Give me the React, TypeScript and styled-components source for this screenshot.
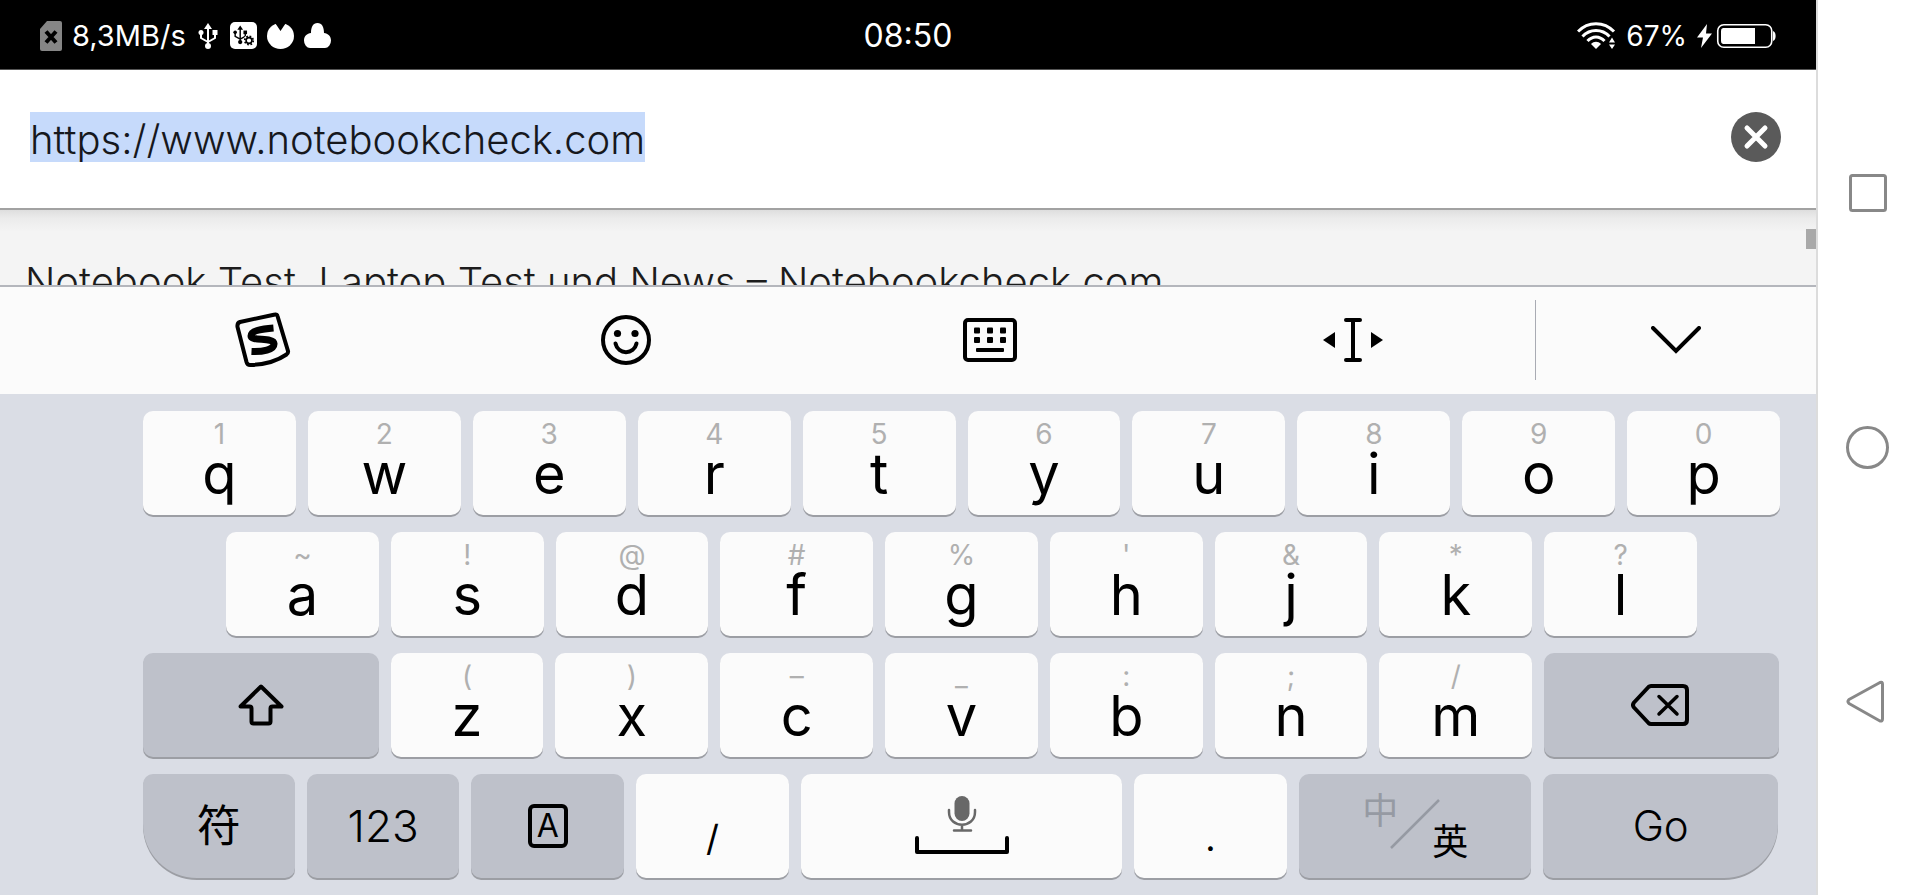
import React from "react";
import styled, { createGlobalStyle, css } from "styled-components";

const GlobalStyle = createGlobalStyle`
  *, *::before, *::after { box-sizing: border-box; }
  body {
    margin: 0;
    background: #fff;
    font-family: Inter, Roboto, "Noto Sans CJK SC", sans-serif;
  }
  button {
    margin: 0;
    padding: 0;
    border: 0;
    background: none;
    color: inherit;
    font: inherit;
    cursor: pointer;
  }
  svg { display: block; flex: none; }
`;

const Device = styled.div`
  display: flex;
  min-height: 100vh;
`;

const Screen = styled.div`
  flex: 1;
  min-width: 0;
  display: flex;
  flex-direction: column;
`;

const StatusBar = styled.header`
  display: grid;
  grid-template-columns: 1fr auto 1fr;
  align-items: center;
  height: 70px;
  padding: 2px 40px 0;
  background: #000;
  border-bottom: 1px solid #555;
  color: #fff;
  font-size: 28px;
`;

const StatusGroup = styled.div<{ $end?: boolean }>`
  display: flex;
  align-items: center;
  gap: 10px;
  justify-content: ${(p) => (p.$end ? "flex-end" : "flex-start")};
`;

const NetworkSpeed = styled.span`
  font-size: 29px;
`;

const Clock = styled.time`
  font-size: 32px;
  line-height: 36px;
`;

const AddressBar = styled.form`
  display: flex;
  align-items: center;
  justify-content: space-between;
  height: 140px;
  padding: 0 35px 4px 30px;
  background: #fff;
  border-bottom: 2px solid #a2a2a2;
`;

const UrlInput = styled.input`
  field-sizing: content;
  height: 50px;
  padding: 4px 0 0;
  border: 0;
  outline: 0;
  background: #c6dafb;
  color: #16181d;
  font: 300 40px/46px Inter, sans-serif;
`;

const Page = styled.main`
  display: flex;
  justify-content: space-between;
  align-items: flex-start;
  height: 75px;
  overflow: hidden;
  background: linear-gradient(#dedede, #ebebeb 8px, #f4f4f4 22px);
`;

const PageTitle = styled.h1`
  margin: 0;
  padding: 48px 0 0 25px;
  color: #1c1c1c;
  font-size: 40px;
  font-weight: 300;
  line-height: 48px;
  white-space: nowrap;
`;

const ScrollThumb = styled.div`
  width: 10px;
  height: 20px;
  margin-top: 19px;
  background: #a9a9a9;
`;

const Toolbar = styled.div`
  display: flex;
  align-items: center;
  height: 109px;
  padding: 0 0 2px 81px;
  border-top: 2px solid #b4b6bc;
  background: #fbfbfb;
`;

const Tool = styled.button<{ $grow: number }>`
  flex: ${(p) => p.$grow} 1 0;
  display: flex;
  align-items: center;
  justify-content: center;
  height: 80px;
`;

const ToolDivider = styled.div`
  width: 1px;
  height: 80px;
  background: #a9abb3;
`;

const Keyboard = styled.section`
  flex: 1;
  display: flex;
  flex-direction: column;
  gap: 17px;
  padding: 17px 36px 17px 143px;
  background: #dadde5;
`;

const KeyRow = styled.div<{ $left?: number; $right?: number }>`
  display: flex;
  gap: 12px;
  padding: 0 ${(p) => p.$right ?? 0}px 0 ${(p) => p.$left ?? 0}px;
`;

type Corner = "left" | "right";

const Key = styled.button<{ $grow?: number; $dark?: boolean; $corner?: Corner }>`
  flex: ${(p) => p.$grow ?? 153} 1 0;
  min-width: 0;
  height: 104px;
  display: flex;
  align-items: center;
  justify-content: center;
  border-radius: 10px;
  background: ${(p) => (p.$dark ? "#bec1ca" : "#fbfbfb")};
  box-shadow: 0 2px 0 #9c9ea4;
  color: #000;
  ${(p) => p.$corner === "left" && css`border-bottom-left-radius: 54px;`}
  ${(p) => p.$corner === "right" && css`border-bottom-right-radius: 54px;`}
`;

const LetterKey = styled(Key)`
  flex-direction: column;
  justify-content: flex-start;
  padding-top: 7px;
`;

const Hint = styled.span`
  color: #b0b0b0;
  font-size: 28px;
  line-height: 32px;
`;

const Letter = styled.span`
  font-size: 56px;
  line-height: 48px;
`;

const KeyLabel = styled.span<{ $size?: number; $light?: boolean }>`
  font-size: ${(p) => p.$size ?? 44}px;
  font-weight: ${(p) => (p.$light ? 300 : 400)};
  line-height: 52px;
`;

const PunctuationLabel = styled.span`
  padding-top: 24px;
  font-size: 36px;
  line-height: 44px;
`;

const BoxedLetter = styled.span`
  width: 40px;
  height: 44px;
  border: 4px solid #000;
  border-radius: 6px;
  font-size: 32px;
  line-height: 36px;
`;

const LanguageLabel = styled.span`
  display: grid;
  grid-template-columns: 20px 50px 20px;
  align-items: center;
  justify-content: center;
  justify-items: center;
  height: 61px;
  margin-bottom: 5px;
  font-family: "Noto Sans CJK SC", sans-serif;
  font-size: 36px;
  line-height: 30px;
`;

const Language = styled.span<{ $active?: boolean }>`
  align-self: ${(p) => (p.$active ? "end" : "start")};
  color: ${(p) => (p.$active ? "#000" : "#969aa3")};
`;

const NavBar = styled.nav`
  display: flex;
  flex-direction: column;
  width: 104px;
  padding: 66px 3px 66px 0;
  border-left: 2px solid #dcdcdc;
  background: #fff;
`;

const NavButton = styled.button`
  flex: 1;
  display: flex;
  align-items: center;
  justify-content: center;
`;

const SimIcon = () => (
  <svg width="22" height="30" viewBox="0 0 22 30" aria-hidden="true">
    <path d="M7 0H20a2 2 0 0 1 2 2V28a2 2 0 0 1-2 2H2a2 2 0 0 1-2-2V8Z" fill="#868686" />
    <path d="M6 10.500 16 21.500M16 10.500 6 21.500" stroke="#000" strokeWidth="4" />
  </svg>
);

const UsbShape = ({ color }: { color: string }) => (
  <g stroke={color} fill="none" strokeWidth="2">
    <path d="M10 5V23M10 19 3 15V9M10 19 17 15V9" />
    <path d="M10 0 14 6H6Z" fill={color} stroke="none" />
    <circle cx="10" cy="23" r="3" fill={color} stroke="none" />
    <circle cx="3" cy="9.500" r="2.500" fill={color} stroke="none" />
    <path d="M14.500 7H19.500V12H14.500Z" fill={color} stroke="none" />
  </g>
);

const UsbIcon = () => (
  <svg width="24" height="26" viewBox="-2 0 24 26" aria-hidden="true">
    <UsbShape color="#fff" />
  </svg>
);

const UsbSettingsIcon = () => (
  <svg width="27" height="27" viewBox="0 0 27 27" aria-hidden="true">
    <rect width="27" height="27" rx="5" fill="#fff" />
    <g transform="translate(3 3.500) scale(.72)">
      <UsbShape color="#000" />
    </g>
    <circle cx="19" cy="18.500" r="5.500" fill="#fff" />
    <circle cx="19" cy="18.500" r="4.200" fill="none" stroke="#000" strokeWidth="1.800" strokeDasharray="1.700 1.600" />
    <circle cx="19" cy="18.500" r="2.900" fill="none" stroke="#000" strokeWidth="1.600" />
  </svg>
);

const NotchedDotIcon = () => (
  <svg width="27" height="27" viewBox="0 0 27 27" aria-hidden="true">
    <ellipse cx="13.500" cy="14" rx="13.500" ry="13" fill="#fff" />
    <path d="M7 0H20L17.500 3 13.500 9 9.500 3Z" fill="#000" />
  </svg>
);

const CloudIcon = () => (
  <svg width="27" height="25" viewBox="0 0 27 25" aria-hidden="true">
    <path
      d="M6 25a6 7.500 0 0 1-6-7.500C0 13 3 10.500 7 10 7 4 9 0 13.500 0S20 4 20 10c4 .5 7 3 7 7.500A6 7.500 0 0 1 21 25Z"
      fill="#fff"
    />
  </svg>
);

const WifiIcon = () => (
  <svg width="39" height="27" viewBox="0 0 39 27" fill="none" aria-hidden="true">
    <g stroke="#fff" strokeWidth="3">
      <path d="M1 9.500C11 -1 27 -1 37 9.500" />
      <path d="M5.500 14.500C13 6.500 25 6.500 32.500 14.500" />
      <path d="M10.500 19C15.500 13.500 22.500 13.500 27.500 19" />
    </g>
    <path d="M14 22C17 19 21 19 24 22L19 27Z" fill="#fff" />
    <path d="M32 20.500 35 15.500 38 20.500ZM32 22.500 35 27 38 22.500Z" fill="#fff" />
  </svg>
);

const BatteryIcon = () => (
  <svg width="79" height="26" viewBox="0 0 79 26" aria-hidden="true">
    <path d="M10 1 0 14.500H6L4 25 15 10.500H9Z" fill="#fff" />
    <rect x="20.750" y="1.750" width="54" height="22.500" rx="6" fill="none" stroke="#fff" strokeWidth="1.600" />
    <path d="M26 5H58V21H26a3 3 0 0 1-2-3V8a3 3 0 0 1 2-3Z" fill="#fff" />
    <path d="M76 8C79.500 9 79.500 17 76 18Z" fill="#fff" />
  </svg>
);

const ClearIcon = () => (
  <svg width="50" height="50" viewBox="0 0 50 50" aria-hidden="true">
    <circle cx="25" cy="25" r="25" fill="#5a5a5a" />
    <path d="M16 16 34 34M34 16 16 34" stroke="#fff" strokeWidth="5" strokeLinecap="round" />
  </svg>
);

const SogouIcon = () => (
  <svg width="56" height="56" viewBox="0 0 56 56" fill="none" stroke="#000" aria-hidden="true">
    <path
      d="M5 10 40 2.500Q42 2 42.500 4L53 39Q53.500 41 51.500 42.500C42 49 29 52.500 16 53Q12.500 53.500 11.500 50L2.500 15Q2 11 5 10Z"
      strokeWidth="4"
    />
    <path d="M38.500 16C27 17 16 18.500 16 24S38.500 25 39 31.500 27 40 16.500 39.500" strokeWidth="7" />
  </svg>
);

const SmileIcon = () => (
  <svg width="50" height="50" viewBox="0 0 50 50" aria-hidden="true">
    <circle cx="25" cy="25" r="23" fill="none" stroke="#000" strokeWidth="4" />
    <circle cx="16.500" cy="18.500" r="3.600" />
    <circle cx="34" cy="18.500" r="3.600" />
    <path d="M14.500 28.500C17 40 33 40 35.500 28.500" fill="none" stroke="#000" strokeWidth="4" strokeLinecap="round" />
  </svg>
);

const KeyboardIcon = () => (
  <svg width="54" height="44" viewBox="0 0 54 44" aria-hidden="true">
    <rect x="2" y="2" width="50" height="40" rx="3" fill="none" stroke="#000" strokeWidth="4" />
    {[9.5, 19].map((y) =>
      [11, 24, 37].map((x) => <rect key={`${x}-${y}`} x={x} y={y} width="6" height="6" rx="1" />)
    )}
    <rect x="13" y="30" width="28" height="4" rx="1" />
  </svg>
);

const CursorIcon = () => (
  <svg width="60" height="44" viewBox="0 0 60 44" aria-hidden="true">
    <path d="M23 2H37M23 42H37M30 2V42" fill="none" stroke="#000" strokeWidth="4" strokeLinecap="round" />
    <path d="M0 22 12 14V30ZM60 22 48 14V30Z" />
  </svg>
);

const ChevronIcon = () => (
  <svg width="50" height="28" viewBox="0 0 50 28" aria-hidden="true">
    <path d="M2 2 25 25 48 2" fill="none" stroke="#000" strokeWidth="4" strokeLinecap="round" />
  </svg>
);

const ShiftIcon = () => (
  <svg width="46" height="42" viewBox="0 0 46 42" aria-hidden="true">
    <path
      d="M23 2.500 43.500 22.500H34.500Q32.500 22.500 32.500 24.500V37.500Q32.500 39.500 30.500 39.500H15.500Q13.500 39.500 13.500 37.500V24.500Q13.500 22.500 11.500 22.500H2.500Z"
      fill="none"
      stroke="#000"
      strokeWidth="4"
      strokeLinejoin="round"
    />
  </svg>
);

const BackspaceIcon = () => (
  <svg width="62" height="42" viewBox="0 0 62 42" fill="none" stroke="#000" aria-hidden="true">
    <path
      d="M20 2H52Q56 2 56 6V36Q56 40 52 40H20Q18.500 40 17.500 39L3 23.500Q1 21 3 18.500L17.500 3Q18.500 2 20 2Z"
      strokeWidth="4"
      strokeLinejoin="round"
    />
    <path d="M28 12.500 46 30M46 12.500 28 30" strokeWidth="3.500" strokeLinecap="round" />
  </svg>
);

const SpaceIcon = () => (
  <svg width="94" height="60" viewBox="0 0 94 60" fill="none" aria-hidden="true">
    <rect x="39.500" y="0" width="15" height="25" rx="7.500" fill="#686868" />
    <path d="M34 14V16C34 33 60 33 60 16V14M47 29V34M39 34.500H56" stroke="#686868" strokeWidth="2.500" strokeLinecap="round" />
    <path d="M2 42V56H92V42" stroke="#000" strokeWidth="4" strokeLinecap="round" strokeLinejoin="round" />
  </svg>
);

const SlashIcon = () => (
  <svg width="50" height="50" viewBox="0 0 50 50" aria-hidden="true">
    <path d="M1 49 49 1" stroke="#969aa3" strokeWidth="2.500" />
  </svg>
);

const RecentsIcon = () => (
  <svg width="38" height="38" viewBox="0 0 38 38" aria-hidden="true">
    <rect x="1.500" y="1.500" width="35" height="35" rx="2" fill="none" stroke="#888" strokeWidth="3" />
  </svg>
);

const HomeIcon = () => (
  <svg width="43" height="43" viewBox="0 0 43 43" aria-hidden="true">
    <circle cx="21.500" cy="21.500" r="20" fill="none" stroke="#888" strokeWidth="3" />
  </svg>
);

const BackIcon = () => (
  <svg width="43" height="43" viewBox="0 0 43 43" aria-hidden="true">
    <path
      d="M34 2.500 3 19.500Q1 21.500 3 23.500L34 41Q36.500 41.500 36.500 39V4Q36.500 1.500 34 2.500Z"
      fill="none"
      stroke="#888"
      strokeWidth="3"
      strokeLinejoin="round"
    />
  </svg>
);

type KeyPair = [hint: string, letter: string];

const topRow: KeyPair[] = [
  ["1", "q"], ["2", "w"], ["3", "e"], ["4", "r"], ["5", "t"],
  ["6", "y"], ["7", "u"], ["8", "i"], ["9", "o"], ["0", "p"],
];
const middleRow: KeyPair[] = [
  ["~", "a"], ["!", "s"], ["@", "d"], ["#", "f"], ["%", "g"],
  ["'", "h"], ["&", "j"], ["*", "k"], ["?", "l"],
];
const bottomRow: KeyPair[] = [
  ["(", "z"], [")", "x"], ["–", "c"], ["_", "v"], [":", "b"], [";", "n"], ["/", "m"],
];

const LetterKeys = ({ keys }: { keys: KeyPair[] }) => (
  <>
    {keys.map(([hint, letter]) => (
      <LetterKey key={letter} type="button">
        <Hint>{hint}</Hint>
        <Letter>{letter}</Letter>
      </LetterKey>
    ))}
  </>
);

export default function App() {
  return (
    <Device>
      <GlobalStyle />
      <Screen>
        <StatusBar>
          <StatusGroup>
            <SimIcon />
            <NetworkSpeed>8,3MB/s</NetworkSpeed>
            <UsbIcon />
            <UsbSettingsIcon />
            <NotchedDotIcon />
            <CloudIcon />
          </StatusGroup>
          <Clock>08:50</Clock>
          <StatusGroup $end>
            <WifiIcon />
            <span>67%</span>
            <BatteryIcon />
          </StatusGroup>
        </StatusBar>

        <AddressBar>
          <UrlInput aria-label="Address" defaultValue="https://www.notebookcheck.com" spellCheck={false} />
          <button type="button" aria-label="Clear address">
            <ClearIcon />
          </button>
        </AddressBar>

        <Page>
          <PageTitle>Notebook Test, Laptop Test und News – Notebookcheck.com</PageTitle>
          <ScrollThumb />
        </Page>

        <Toolbar>
          <Tool type="button" $grow={363} aria-label="Input method menu"><SogouIcon /></Tool>
          <Tool type="button" $grow={363} aria-label="Emoji"><SmileIcon /></Tool>
          <Tool type="button" $grow={363} aria-label="Keyboard layout"><KeyboardIcon /></Tool>
          <Tool type="button" $grow={363} aria-label="Move cursor"><CursorIcon /></Tool>
          <ToolDivider />
          <Tool type="button" $grow={280} aria-label="Hide keyboard"><ChevronIcon /></Tool>
        </Toolbar>

        <Keyboard aria-label="Keyboard">
          <KeyRow>
            <LetterKeys keys={topRow} />
          </KeyRow>
          <KeyRow $left={83} $right={83}>
            <LetterKeys keys={middleRow} />
          </KeyRow>
          <KeyRow $right={1}>
            <Key type="button" $dark $grow={236} aria-label="Shift"><ShiftIcon /></Key>
            <LetterKeys keys={bottomRow} />
            <Key type="button" $dark $grow={235} aria-label="Backspace"><BackspaceIcon /></Key>
          </KeyRow>
          <KeyRow $right={2}>
            <Key type="button" $dark $grow={152} $corner="left"><KeyLabel>符</KeyLabel></Key>
            <Key type="button" $dark><KeyLabel $light>123</KeyLabel></Key>
            <Key type="button" $dark><BoxedLetter>A</BoxedLetter></Key>
            <Key type="button"><PunctuationLabel>/</PunctuationLabel></Key>
            <Key type="button" $grow={322} aria-label="Space"><SpaceIcon /></Key>
            <Key type="button"><PunctuationLabel>.</PunctuationLabel></Key>
            <Key type="button" $dark $grow={233}>
              <LanguageLabel>
                <Language>中</Language>
                <SlashIcon />
                <Language $active>英</Language>
              </LanguageLabel>
            </Key>
            <Key type="button" $dark $grow={235} $corner="right"><KeyLabel $size={42} $light>Go</KeyLabel></Key>
          </KeyRow>
        </Keyboard>
      </Screen>

      <NavBar aria-label="System navigation">
        <NavButton type="button" aria-label="Recent apps"><RecentsIcon /></NavButton>
        <NavButton type="button" aria-label="Home"><HomeIcon /></NavButton>
        <NavButton type="button" aria-label="Back"><BackIcon /></NavButton>
      </NavBar>
    </Device>
  );
}
